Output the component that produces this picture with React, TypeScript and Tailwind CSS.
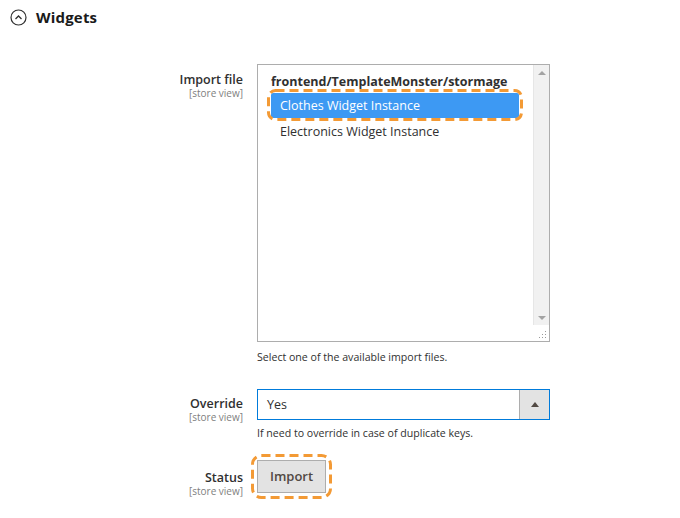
import React from "react";

const Dashed = ({ r = 8 }: { r?: number }) => (
  <svg className="absolute inset-0 w-full h-full overflow-visible pointer-events-none" preserveAspectRatio="none">
    <rect x="1.5" y="1.5" width="calc(100% - 3px)" height="calc(100% - 3px)" rx={r} fill="none" stroke="#f39a35" strokeWidth="3" strokeDasharray="9 5" />
  </svg>
);

const Label = ({ text }: { text: string }) => (
  <div className="w-[243px] text-right shrink-0">
    <div className="text-[12.5px] font-semibold text-[#303030] leading-[15px]">{text}</div>
    <div className="text-[10px] text-[#808080] leading-[11px] mt-[1px]">[store view]</div>
  </div>
);

export default function App() {
  return (
    <div className="w-[680px] h-[518px] bg-white relative" style={{ fontFamily: '"Open Sans", sans-serif' }}>
      <div className="flex items-center pl-[10px] pt-[1px] h-[34px] gap-[9px]">
        <svg width="17" height="17" viewBox="0 0 17 17">
          <circle cx="8.5" cy="8.5" r="7.5" fill="none" stroke="#303030" strokeWidth="1.2" />
          <path d="M5.5 10 L8.5 7 L11.5 10" fill="none" stroke="#303030" strokeWidth="1.3" />
        </svg>
        <span className="text-[15px] font-bold text-[#1a1a1a] tracking-[0.2px]">Widgets</span>
      </div>

      <div className="pt-[30px]">
        <div className="flex gap-[14px]">
          <div className="pt-[8px]">
            <Label text="Import file" />
          </div>
          <div>
            <div className="w-[293px] h-[278px] border border-[#adadad] flex relative">
              <div className="flex-1 pl-[13px] pt-[7px]">
                <div className="text-[12.5px] font-bold text-[#303030] leading-[20px]">frontend/TemplateMonster/stormage</div>
                <div className="relative w-[256px] h-[32px] -ml-[4px] -mt-[3px] p-[4px]">
                  <div className="bg-[#3d99f3] text-white text-[12.5px] h-[25px] leading-[25px] pl-[9px] rounded-[2px]">Clothes Widget Instance</div>
                  <Dashed r={7} />
                </div>
                <div className="text-[12.5px] text-[#303030] leading-[25px] pl-[9px] mt-[-2px]">Electronics Widget Instance</div>
              </div>
              <div className="w-[16px] bg-[#f1f1f1] border-l border-[#e6e6e6] flex flex-col items-center mb-[16px]">
                <svg width="8" height="5" className="mt-[5px]" viewBox="0 0 8 5"><path d="M0 5 L4 1 L8 5Z" fill="#a3a3a3" /></svg>
                <div className="flex-1" />
                <svg width="8" height="5" className="mb-[4px]" viewBox="0 0 8 5"><path d="M0 0 L4 4 L8 0Z" fill="#a3a3a3" /></svg>
              </div>
              <svg className="absolute right-[2px] bottom-[2px]" width="9" height="9" viewBox="0 0 9 9">
                <rect x="7" y="1" width="1" height="1" fill="#9a9a9a" />
                <rect x="4" y="4" width="1" height="1" fill="#9a9a9a" />
                <rect x="7" y="4" width="1" height="1" fill="#9a9a9a" />
                <rect x="1" y="7" width="1" height="1" fill="#9a9a9a" />
                <rect x="4" y="7" width="1" height="1" fill="#9a9a9a" />
                <rect x="7" y="7" width="1" height="1" fill="#9a9a9a" />
              </svg>
            </div>
            <div className="text-[10.6px] text-[#303030] mt-[8px] leading-[14px]">Select one of the available import files.</div>
          </div>
        </div>

        <div className="flex gap-[14px] mt-[25px]">
          <div className="pt-[7px]">
            <Label text="Override" />
          </div>
          <div>
            <div className="w-[293px] h-[31px] border border-[#007bdb] flex">
              <div className="flex-1 text-[12.5px] text-[#303030] leading-[29px] pl-[9px]">Yes</div>
              <div className="w-[30px] bg-[#e3e3e3] border-l border-[#adadad] flex items-center justify-center">
                <svg width="8" height="5" viewBox="0 0 8 5"><path d="M0 5 L4 0 L8 5Z" fill="#514943" /></svg>
              </div>
            </div>
            <div className="text-[10.6px] text-[#303030] mt-[6px] leading-[14px]">If need to override in case of duplicate keys.</div>
          </div>
        </div>

        <div className="flex gap-[14px] mt-[20px]">
          <div className="pt-[10px]">
            <Label text="Status" />
          </div>
          <div className="relative -ml-[6px] -mt-[6px] p-[6px]">
            <div className="w-[69px] h-[33px] bg-[#e3e3e3] border border-[#adadad] text-[13px] font-semibold text-[#514943] flex items-center justify-center">Import</div>
            <Dashed r={9} />
          </div>
        </div>
      </div>
    </div>
  );
}
